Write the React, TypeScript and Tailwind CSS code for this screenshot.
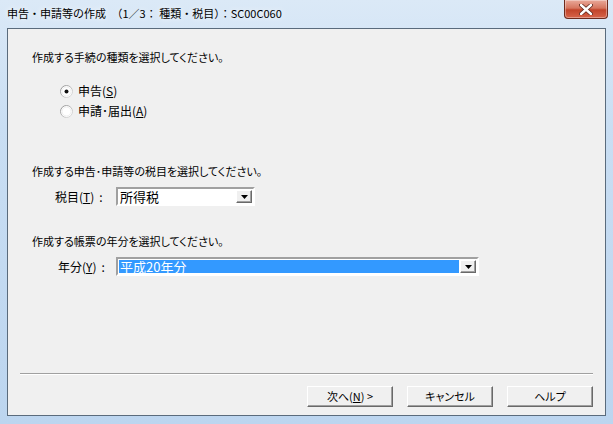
import React from "react";

const font = "font-['MS_UI_Gothic','Noto_Sans_CJK_JP',sans-serif]";

const Radio = ({ checked }: { checked?: boolean }) => (
  <svg width="13" height="13" viewBox="0 0 13 13">
    <defs>
      <linearGradient id={checked ? "rg1" : "rg2"} x1="0" y1="0" x2="1" y2="1">
        <stop offset="0" stopColor="#8e8e8e" />
        <stop offset="1" stopColor="#e4e4e4" />
      </linearGradient>
    </defs>
    <circle cx="6.5" cy="6.5" r="6" fill="#ffffff" stroke={`url(#${checked ? "rg1" : "rg2"})`} strokeWidth="1" />
    <circle cx="6.5" cy="6.5" r="4.5" fill="none" stroke="#eeeeee" strokeWidth="1" />
    {checked && <circle cx="6.5" cy="6.5" r="2" fill="#111111" />}
  </svg>
);

const DropArrow = () => (
  <div className="flex h-full w-[16px] items-center justify-center bg-[#f0f0f0] border border-t-white border-l-white border-r-[#696969] border-b-[#696969] shadow-[inset_-1px_-1px_#a0a0a0]">
    <svg width="7" height="4" viewBox="0 0 7 4">
      <polygon points="0,0 7,0 3.5,4" fill="#000000" />
    </svg>
  </div>
);

const Select = ({ value, width, selected }: { value: string; width: string; selected?: boolean }) => (
  <div className={`flex h-[19px] ${width} border-2 border-t-[#a0a0a0] border-l-[#a0a0a0] border-r-white border-b-white bg-white`}>
    <div className="flex flex-1 items-center p-[1px]">
      <div
        className={`flex h-full flex-1 items-center pl-[1px] text-[13px] leading-none ${
          selected ? "bg-[#3399ff] text-white" : "text-black"
        }`}
      >
        {value}
      </div>
    </div>
    <div className="p-[1px] pl-0">
      <DropArrow />
    </div>
  </div>
);

const Button = ({ children }: { children: React.ReactNode }) => (
  <div className="flex h-[21px] w-[86px] items-center justify-center bg-[#f0f0f0] border border-t-white border-l-white border-r-[#696969] border-b-[#696969] shadow-[inset_-1px_-1px_#a0a0a0] text-[11px] leading-none text-black [font-feature-settings:'palt']">
    {children}
  </div>
);

const CloseButton = () => (
  <div className="flex h-[19px] w-[44px] items-center justify-center rounded-b-[4px] border border-t-0 border-[#6d2a1d] bg-[linear-gradient(#e9a99a,#d6765f_45%,#c2442a_55%,#d7644a)] shadow-[inset_0_0_0_1px_rgba(255,255,255,0.35)]">
    <svg width="14" height="11" viewBox="0 0 14 11">
      <path d="M2 1 L12 10 M12 1 L2 10" stroke="#5a2418" strokeWidth="4" strokeLinecap="round" />
      <path d="M2 1 L12 10 M12 1 L2 10" stroke="#ffffff" strokeWidth="2.4" strokeLinecap="round" />
    </svg>
  </div>
);

export default function App() {
  return (
    <div className={`flex h-[424px] w-[613px] flex-col ${font} bg-[linear-gradient(180deg,#dbe9f7_0%,#c9def3_30%,#bcd5ef_100%)]`}>
      <div className="flex h-[28px] items-start justify-between">
        <div className="pl-[7px] pt-[8px] text-[11px] leading-none text-black [text-shadow:0_0_6px_#ffffff]">
          申告・申請等の作成　（1／3： 種類・税目）：SC00C060
        </div>
        <div className="pr-[5px]">
          <CloseButton />
        </div>
      </div>
      <div className="mx-[7px] flex h-[388px] flex-col border border-[#5a6b7c] bg-[#f0f0f0] text-[11px] leading-[14px] text-black [font-feature-settings:'palt']">
        <div className="mt-[21px] pl-[24px]">作成する手続の種類を選択してください。</div>
        <div className="mt-[20px] flex items-center gap-[5px] pl-[52px] text-[12px]">
          <Radio checked />
          <span>
            申告(<u>S</u>)
          </span>
        </div>
        <div className="mt-[6px] flex items-center gap-[5px] pl-[52px] text-[12px]">
          <Radio />
          <span>
            申請･届出(<u>A</u>)
          </span>
        </div>
        <div className="mt-[46px] pl-[24px]">作成する申告･申請等の税目を選択してください。</div>
        <div className="mt-[9px] flex items-center pl-[47px] text-[12px]">
          <span className="w-[61px]">
            税目(<u>T</u>)<span className="pl-[5px]">:</span>
          </span>
          <Select value="所得税" width="w-[139px]" />
        </div>
        <div className="mt-[28px] pl-[24px]">作成する帳票の年分を選択してください。</div>
        <div className="mt-[9px] flex items-center pl-[50px] text-[12px]">
          <span className="w-[58px]">
            年分(<u>Y</u>)<span className="pl-[5px]">:</span>
          </span>
          <Select value="平成20年分" width="w-[363px]" selected />
        </div>
        <div className="mx-[12px] mt-[97px] h-[2px] border-t border-t-[#a0a0a0] border-b border-b-white" />
        <div className="mt-[11px] flex justify-end gap-[14px] pr-[12px]">
          <Button>
            次へ(<u>N</u>) &gt;
          </Button>
          <Button>キャンセル</Button>
          <Button>ヘルプ</Button>
        </div>
      </div>
    </div>
  );
}
